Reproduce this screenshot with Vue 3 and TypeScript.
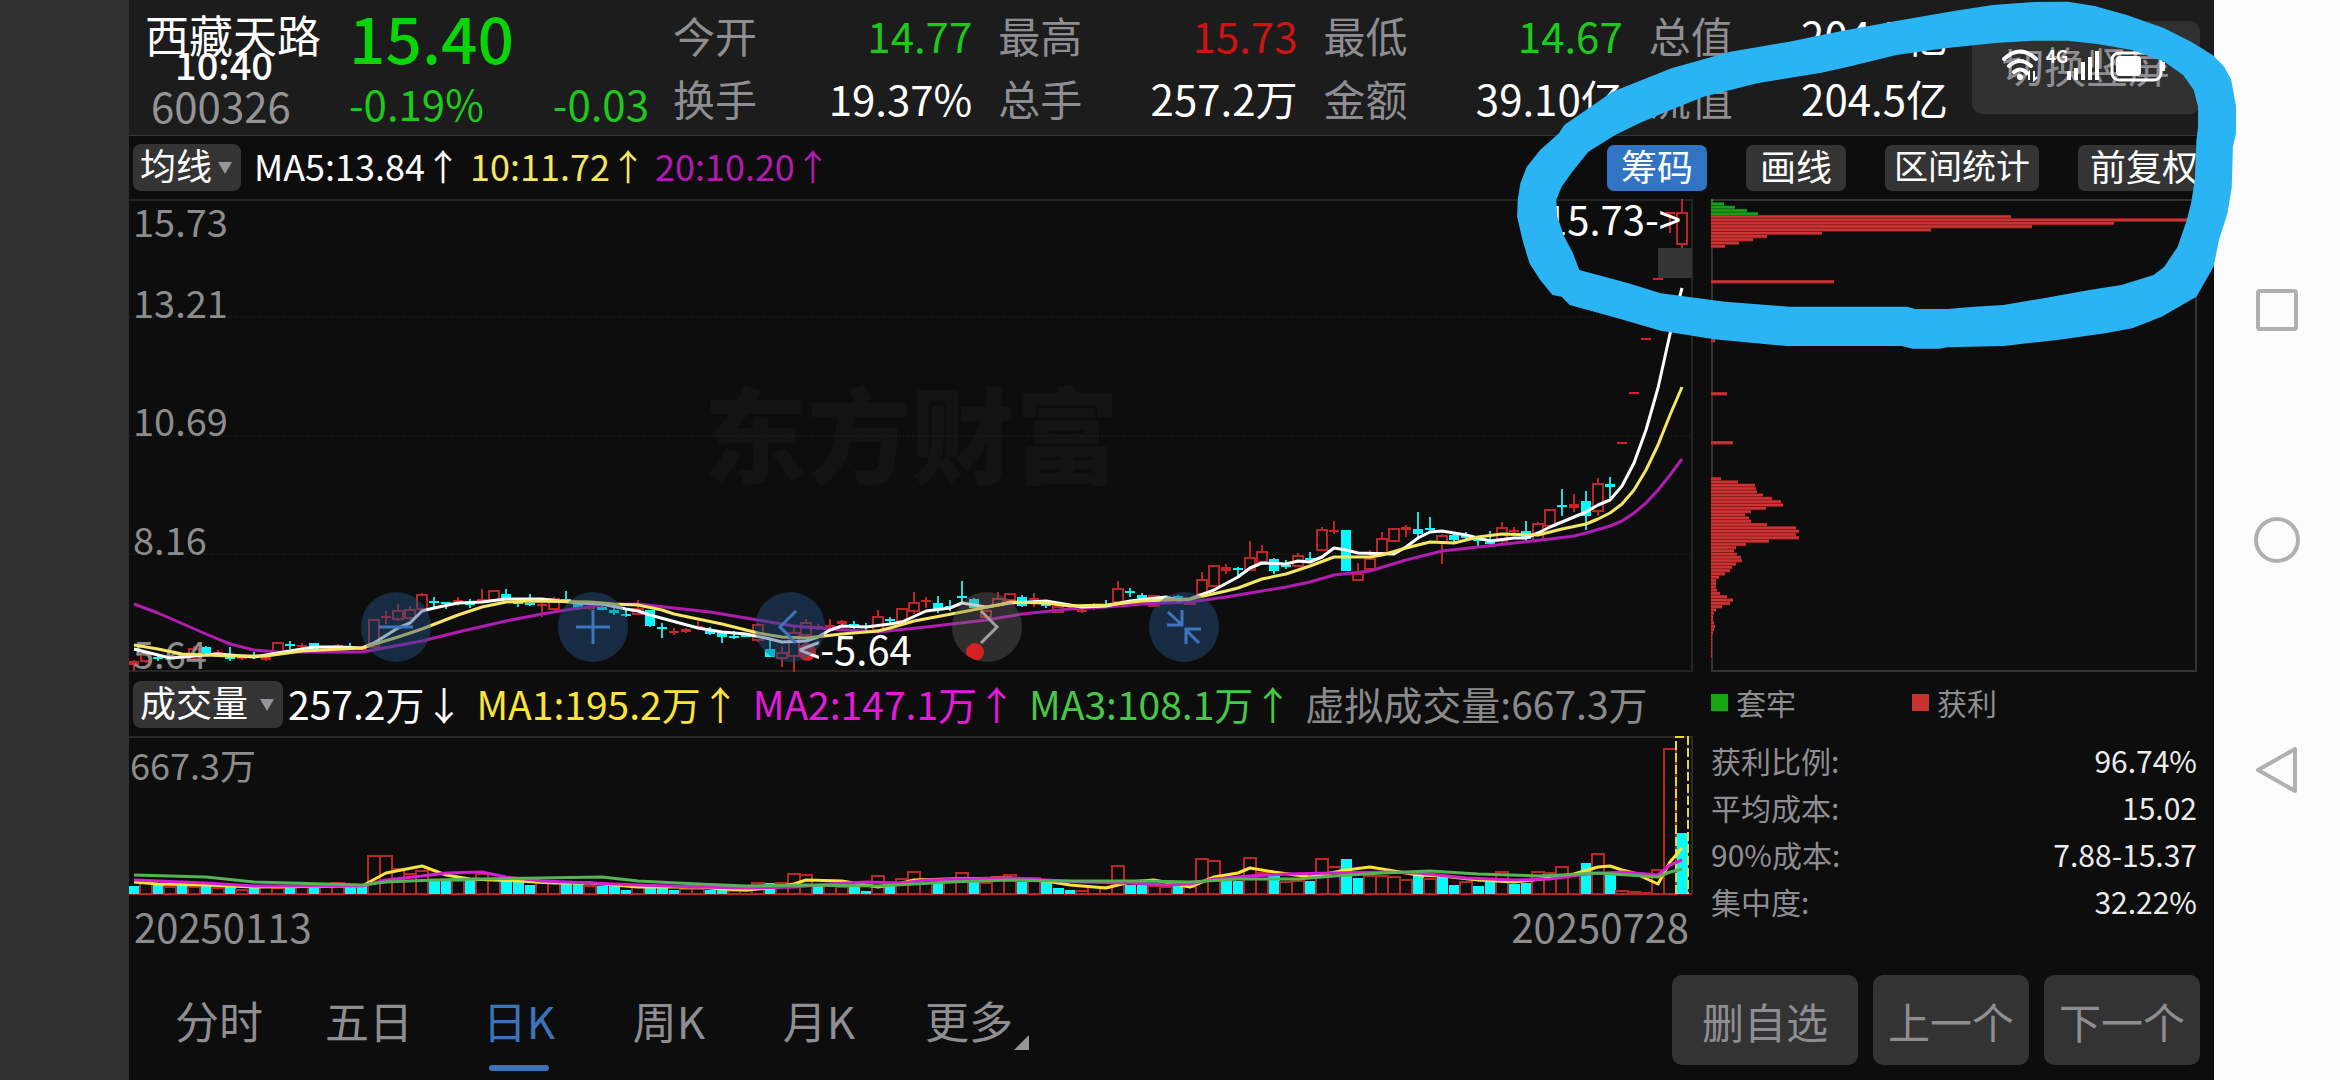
<script setup lang="ts">
import { computed, ref } from 'vue'

type Tone = 'up' | 'down' | 'flat' | 'plain'
interface Stat { label: string; value: string; tone: Tone }
interface Candle { x: number; rise: boolean; high: number; top: number; bottom: number; low: number }
interface Bar { x: number; rise: boolean; height: number }
interface Chip { y: number; width: number; trapped: boolean }

const stats: Stat[] = [
  { label: '今开', value: '14.77', tone: 'down' },
  { label: '最高', value: '15.73', tone: 'up' },
  { label: '最低', value: '14.67', tone: 'down' },
  { label: '总值', value: '204.5亿', tone: 'plain' },
  { label: '换手', value: '19.37%', tone: 'plain' },
  { label: '总手', value: '257.2万', tone: 'plain' },
  { label: '金额', value: '39.10亿', tone: 'plain' },
  { label: '流值', value: '204.5亿', tone: 'plain' },
]

const tools = ['筹码', '画线', '区间统计', '前复权']
const activeTool = ref('筹码')
const periods = ['分时', '五日', '日K', '周K', '月K', '更多']
const activePeriod = ref('日K')

const chipStats = [
  ['获利比例:', '96.74%'],
  ['平均成本:', '15.02'],
  ['90%成本:', '7.88-15.37'],
  ['集中度:', '32.22%'],
]

const FIRST_X = 134
const STEP = 12
const xAt = (index: number): number => FIRST_X + STEP * index

/* One day each: r rises, c falls; then high, body top, body bottom, low. */
const candleSource = `
r660,661,665,671 r653,655,661,663 c655,657,659,661 r657,658,659,660 r656,657,659,661
r646,649,659,661 c646,647,653,655 r650,652,653,656 c647,654,659,661 r656,657,659,660
c652,656,658,659 r656,657,660,661 r643,643,652,652 c641,644,646,649 r643,645,647,649
c643,643,649,649 r648,648,650,650 r644,645,647,648 c643,647,648,649 r648,648,650,650
r619,620,647,650 r611,616,618,624 r604,611,619,621 r606,610,618,620 r593,595,609,611
c597,601,603,608 c602,602,604,609 r597,600,602,606 c599,603,605,608 r589,599,601,603
r591,591,600,600 c589,594,599,600 c600,602,603,607 c594,603,605,606 r603,604,606,617
r597,599,609,611 c591,599,600,602 c604,604,608,608 r606,607,609,610 c606,607,610,610
c608,610,613,615 c610,614,615,617 r600,609,614,615 c610,610,626,627 c623,627,629,638
r628,631,632,635 r628,629,632,633 r621,626,627,628 c627,631,634,635 c632,633,637,643
c631,636,637,639 c633,635,637,637 r623,625,640,642 c640,649,657,657 r647,653,658,667
r627,633,656,672 r619,623,635,638 r624,626,628,630 r619,625,627,628 r620,621,624,625
c621,624,628,629 c623,626,628,630 r610,617,630,630 c617,619,621,624 r608,609,621,621
r592,603,611,614 r597,600,602,608 c596,603,610,613 c600,606,607,611 c581,596,598,602
c598,599,608,608 r610,611,617,618 r592,599,605,606 r593,594,600,601 c595,597,606,607
r593,598,600,607 c602,603,606,608 r607,607,612,612 r605,605,607,607 r609,610,612,613
r603,606,608,610 c600,604,605,606 r581,589,602,602 c588,591,593,597 c593,595,599,600
r595,596,606,607 r597,598,602,603 c595,596,599,600 r598,599,604,605 r572,580,594,595
r565,566,586,586 r564,567,571,574 c567,568,570,577 r541,558,570,571 r545,552,562,562
c558,559,571,574 c560,565,567,569 r553,556,566,567 c552,558,560,562 r527,530,550,551
r521,530,532,534 c530,530,571,571 r563,574,580,580 r550,559,569,570 r532,539,553,554
r528,529,541,542 r525,527,530,537 c512,529,534,537 c517,528,530,531 r534,536,542,564
c534,535,540,542 c532,536,538,539 c536,539,541,546 c531,542,544,545 r522,528,541,545
r527,530,532,534 c521,531,539,541 r522,524,540,541 r509,510,526,526 c489,505,506,516
r494,504,508,512 c491,501,516,530 r478,484,511,516 c477,484,487,498 r442,442,444,444
r392,392,394,394 r338,338,340,340 r278,278,280,280 r212,212,214,233 r199,213,244,248`

const candles = computed<Candle[]>(() =>
  candleSource.trim().split(/\s+/).map((item, index) => {
    const [high, top, bottom, low] = item.slice(1).split(',').map(Number)
    return { x: xAt(index), rise: item[0] === 'r', high, top, bottom, low }
  }),
)

const volumeSource = `
c8 r11 c9 r7 c8 r7 c8 r6 c8 r4 c7 r7 r6 c8 r7 c8 r7 r11 c9 c9
r38 r38 r25 r20 r23 c14 c14 r13 c14 r20 r15 c13 c12 c9 r11 r11 c11 c10 r8 c8
c8 c4 r8 c8 c8 c4 r5 r5 c4 c4 r3 r3 r11 c11 r11 r20 r19 c9 r8 r7
c8 c3 r18 c8 r15 r22 r15 c10 r14 r21 c12 r11 r17 r19 c12 r16 c13 c6 c4 r3
r7 r7 r28 c9 c9 r8 r7 c8 r7 r35 r33 c14 c13 r36 r21 c18 r12 r13 c13 r35
r27 c35 c16 r18 r18 r17 r14 c19 r15 c17 c9 r12 c8 c12 r22 c10 c11 r22 r21 r27
r19 c31 r40 c19 r3 r2 r1 r24 r145 c61`

const volumes = computed<Bar[]>(() =>
  volumeSource.trim().split(/\s+/).map((item, index) => ({
    x: xAt(index), rise: item[0] === 'r', height: Number(item.slice(1)),
  })),
)

/* Lines are kept as "day:height" pairs. */
const toPoints = (source: string): string =>
  source.split(' ').map((pair) => {
    const [day, y] = pair.split(':').map(Number)
    return `${xAt(day)},${y}`
  }).join(' ')

const priceLines = [
  { color: '#b01cb0', points: toPoints('0:604 2:613 6:634 8:644 10:650 12:652 19:652 24:641 27:632 31:621 34:614 36:610 39:605 42:604 45:608 48:612 52:620 55:626 58:629 62:632 66:627 71:620 74:614 78:609 81:607 84:604 88:602 91:597 94:591 96:587 98:582 100:575 103:571 106:560 109:551 112:547 115:543 118:539 120:536 121:533 123:526 124:521 125:513 126:503 127:490 128:475 129:459') },
  { color: '#ffffff', points: toPoints('0:649 2:655 3:658 4:657 7:654 10:657 13:651 15:647 17:647 19:648 20:643 22:628 23:623 24:611 25:608 27:603 29:602 31:599 34:599 37:603 39:604 41:609 42:611 43:615 47:628 49:632 51:634 53:639 54:642 56:641 57:637 58:630 59:626 61:627 63:624 64:622 66:611 68:608 69:603 71:607 73:603 76:601 78:605 79:607 81:606 83:601 86:597 87:600 88:599 90:590 92:577 93:568 94:563 96:564 97:561 98:562 99:557 100:548 101:550 102:553 105:554 106:547 107:538 108:532 109:531 111:535 113:541 115:538 116:538 117:533 118:527 120:517 121:512 122:505 123:500 124:486 125:463 126:430 127:388 128:334 129:288') },
  { color: '#f5e663', points: toPoints('0:645 2:649 4:654 8:656 11:656 14:651 19:648 22:637 24:629 27:615 29:607 31:602 33:601 38:602 40:604 42:605 44:610 45:614 49:624 52:633 54:637 56:638 59:634 62:631 63:628 65:621 69:612 72:605 73:602 76:603 78:606 81:605 84:601 88:599 91:591 92:588 94:579 96:574 98:566 100:557 103:557 104:555 106:548 108:542 110:543 112:537 114:534 117:535 119:529 121:524 122:519 123:513 124:504 125:490 126:470 127:445 128:415 129:387') },
]

const volumeLines = [
  { color: '#fbe437', points: toPoints('0:882 2:884 6:885 10:887 19:886 21:873 24:866 26:875 28:879 32:881 35:883 38:883 42:887 47:887 49:889 51:890 53:888 55:884 56:880 59:881 62:887 64:883 65:880 68:879 73:878 76:881 78:885 81:888 83:882 85:880 88:887 90:877 92:873 93:868 95:872 98:877 101:870 103:867 105:871 107:875 109:876 112:880 115:882 118:878 120:874 122:867 123:866 124:870 125:873 127:884 128:862 129:848') },
  { color: '#d61fd0', points: toPoints('0:880 6:883 10:886 19:886 21:880 24:876 26:873 29:872 31:877 34:881 38:883 42:885 47:887 51:888 55:887 58:884 61:882 64:883 66:880 73:878 76:880 79:882 83:883 86:885 88:884 90:879 93:876 96:874 100:873 104:872 107:873 111:878 115:880 118:879 121:874 124:872 127:875 128:865 129:860') },
  { color: '#55b555', points: toPoints('0:875 6:877 10:882 16:884 19:885 21:882 25:880 29:879 39:877 42:881 47:884 51:886 56:885 62:886 68:882 73:880 77:881 84:881 88:882 92:879 97:879 100:876 104:873 108:871 112:874 117:876 119:875 122:873 127:877 128:872 129:869') },
]

const gridRows = [317, 436, 554]
const priceLabels = [
  { y: 237, text: '15.73' },
  { y: 318, text: '13.21' },
  { y: 436, text: '10.69' },
  { y: 555, text: '8.16' },
  { y: 669, text: '5.64' },
]

const CHIP_STEP = 3.28
const run = (start: number, widths: number[], trapped = false): Chip[] =>
  widths.map((width, index) => ({ y: start + index * CHIP_STEP, width, trapped }))

const chips: Chip[] = [
  ...run(199, [2, 13, 24, 36, 47], true),
  ...run(215, [300, 484, 403, 321, 220, 111, 56, 42, 28, 14]),
  ...run(280, [123]),
  ...run(339, [4]),
  ...run(392, [16]),
  ...run(441, [22]),
  ...run(477, [10, 27, 44, 45, 46, 52, 61, 70, 72, 55, 40, 34, 38, 40, 56, 85, 88, 85, 88, 58, 35, 25, 23, 26, 30, 31, 25, 21, 19, 14, 8, 5, 5, 5, 6, 9, 16, 22, 19, 11, 5, 3, 2, 2, 3, 4, 3, 2, 1, 1, 1, 1, 1, 1, 1]),
]
</script>

<template>
  <div class="screen">
    <div class="gutter"></div>

    <main class="app">
      <header class="quote">
        <div class="identity">
          <h1>西藏天路</h1>
          <p>600326</p>
        </div>
        <div class="price">
          <strong>15.40</strong>
          <p><span>-0.19%</span><span>-0.03</span></p>
        </div>
        <dl class="stats">
          <div v-for="stat in stats" :key="stat.label">
            <dt>{{ stat.label }}</dt>
            <dd :class="stat.tone">{{ stat.value }}</dd>
          </div>
        </dl>
        <button class="rotate" type="button">切换竖屏</button>
      </header>

      <div class="toolbar">
        <label class="picker">
          <select aria-label="均线"><option>均线</option></select>
          <i class="caret"></i>
        </label>
        <p class="averages">
          <span>MA5:13.84↑</span><span class="yellow">10:11.72↑</span><span class="purple">20:10.20↑</span>
        </p>
        <div class="tools">
          <button
            v-for="tool in tools"
            :key="tool"
            type="button"
            :class="{ active: tool === activeTool, long: tool.length > 3, medium: tool.length === 3 }"
            @click="activeTool = tool"
          >{{ tool }}</button>
        </div>
      </div>

      <section class="board">
        <div class="left">
          <div class="kline">
            <svg viewBox="129 199 1564 473">
              <text class="watermark" x="911" y="476" text-anchor="middle">东方财富</text>
              <g stroke="#2c2c2c" fill="none">
                <line v-for="y in gridRows" :key="y" x1="129" :y1="y" x2="1692" :y2="y" stroke-dasharray="1 2" />
              </g>
              <path d="M129 200H1692V671H129" fill="none" stroke="#242424" stroke-width="2" />
              <rect x="1658" y="248" width="34" height="30" fill="#343434" />
              <g v-for="c in candles" :key="c.x" :class="c.rise ? 'rise' : 'fall'">
                <path :d="`M${c.x} ${c.high}V${c.top}M${c.x} ${c.bottom}V${c.low}`" stroke-width="2" />
                <rect
                  v-if="c.rise && c.bottom - c.top > 4"
                  class="hollow" :x="c.x - 5" :y="c.top" width="10" :height="c.bottom - c.top" stroke-width="2"
                />
                <rect v-else class="solid" :x="c.x - 5" :y="c.top" width="10" :height="Math.max(2, c.bottom - c.top)" />
              </g>
              <g class="scale">
                <text v-for="label in priceLabels" :key="label.text" x="133" :y="label.y">{{ label.text }}</text>
              </g>
              <polyline
                v-for="line in priceLines" :key="line.color" :points="line.points"
                fill="none" :stroke="line.color" stroke-width="3" stroke-linejoin="round"
              />
              <circle cx="807" cy="652" r="9" fill="#d42222" />
              <text class="mark" x="798" y="665">&lt;-5.64</text>
              <text class="mark" x="1681" y="235" text-anchor="end">15.73-&gt;</text>
            </svg>
            <div class="controls">
              <button type="button" aria-label="-"><svg viewBox="0 0 70 70"><path d="M18 35H52" /></svg></button>
              <button type="button" aria-label="+"><svg viewBox="0 0 70 70"><path d="M18 35H52M35 18V52" /></svg></button>
              <button type="button" aria-label="&lt;"><svg viewBox="0 0 70 70"><path d="M41 19L25 35L41 51" /></svg></button>
              <button type="button" aria-label="&gt;" class="muted">
                <svg viewBox="0 0 70 70"><circle cx="23" cy="60" r="9" /><path d="M29 19L45 35L29 51" /></svg>
              </button>
              <button type="button" aria-label="><"><svg viewBox="0 0 70 70"><path d="M19 20L32 32M33 18V33H18M50 51L38 39M37 52V37H52" /></svg></button>
            </div>
          </div>

          <div class="volume-bar">
            <label class="picker wide">
              <select aria-label="成交量"><option>成交量</option></select>
              <i class="caret"></i>
            </label>
            <p>
              <span>257.2万↓</span><span class="bright">MA1:195.2万↑</span><span class="pink">MA2:147.1万↑</span><span class="green">MA3:108.1万↑</span><span class="dim">虚拟成交量:667.3万</span>
            </p>
          </div>

          <svg viewBox="129 736 1564 159">
            <path d="M129 737H1692V894" fill="none" stroke="#2a2a2a" stroke-width="2" />
            <text class="amount" x="130" y="780">667.3万</text>
            <path d="M129 894H1692" stroke="#8c2020" stroke-width="2" />
            <g v-for="b in volumes" :key="b.x">
              <rect v-if="b.rise" class="rise hollow" :x="b.x - 6" :y="894 - b.height" width="12" :height="b.height" stroke-width="2" />
              <rect v-else class="fall solid" :x="b.x - 5" :y="894 - b.height" width="11" :height="b.height" />
            </g>
            <path d="M1676 894V737H1688V894" fill="none" stroke="#e8d531" stroke-width="2" stroke-dasharray="9 3" />
            <polyline
              v-for="line in volumeLines" :key="line.color" :points="line.points"
              fill="none" :stroke="line.color" stroke-width="3" stroke-linejoin="round"
            />
          </svg>

          <div class="dates"><time>20250113</time><time>20250728</time></div>
        </div>

        <aside class="right">
          <svg viewBox="1711 199 486 473">
            <path d="M1712 200H2196V671H1712Z" fill="none" stroke="#333" stroke-width="2" />
            <g v-for="chip in chips" :key="chip.y">
              <rect x="1711" :y="chip.y" :width="chip.width" height="3.600" :fill="chip.trapped ? '#0c6e0c' : '#8f1c1c'" />
              <rect x="1711" :y="chip.y + 0.500" :width="chip.width" height="2.300" :fill="chip.trapped ? '#18a018' : '#cc3535'" />
            </g>
          </svg>
          <ul>
            <li><i class="box trapped"></i>套牢</li>
            <li><i class="box gained"></i>获利</li>
          </ul>
          <dl>
            <div v-for="[label, value] in chipStats" :key="label">
              <dt>{{ label }}</dt>
              <dd>{{ value }}</dd>
            </div>
          </dl>
        </aside>
      </section>

      <footer>
        <nav>
          <button
            v-for="period in periods"
            :key="period"
            type="button"
            :class="{ active: period === activePeriod }"
            @click="activePeriod = period"
          >{{ period }}<i v-if="period === '更多'" class="corner"></i></button>
        </nav>
        <div class="actions">
          <button type="button" class="remove">删自选</button>
          <button type="button">上一个</button>
          <button type="button">下一个</button>
        </div>
      </footer>

      <time class="clock">10:40</time>
      <svg class="status" viewBox="0 0 164 34">
        <g fill="none" stroke="#fff" stroke-width="4" stroke-linecap="round">
          <path d="M3 10Q19 -5 35 10M8 17Q19 7 30 17M13 23Q19 18 25 23" />
        </g>
        <circle cx="19" cy="28" r="3" fill="#fff" />
        <path d="M28 31V23L25 26M33 22V31L36 28" fill="none" stroke="#fff" stroke-width="2" />
        <text x="45" y="14">4G</text>
        <path d="M66 22h4v9h-4zM73 19h4v12h-4zM80 13h4v18h-4zM87 8h4v23h-4zM94 2h4v29h-4z" fill="#fff" />
        <rect x="111" y="4" width="49" height="27" rx="7" fill="none" stroke="#fff" stroke-width="3" />
        <rect x="115" y="7" width="25" height="20" rx="4" fill="#fff" />
        <path d="M162 13v9" stroke="#fff" stroke-width="4" />
      </svg>
    </main>

    <nav class="system">
      <button type="button" aria-label="□"><svg viewBox="0 0 46 46"><rect x="4" y="4" width="38" height="38" rx="2" /></svg></button>
      <button type="button" aria-label="○"><svg viewBox="0 0 46 46"><circle cx="23" cy="23" r="21" /></svg></button>
      <button type="button" aria-label="◁"><svg viewBox="0 0 46 46"><path d="M4 23L41 2V44Z" /></svg></button>
    </nav>

    <svg class="loop" viewBox="0 0 1568 1080" preserveAspectRatio="none">
      <path
        fill="#2bb4f4"
        fill-rule="evenodd"
        d="M1060 5L1110 18L1170 45L1240 85L1290 125L1330 165L1352 200L1365 240L1374 320L1374 400L1368 440L1366 560L1358 640L1342 720L1332 800L1300 890L1235 950L1180 985L1130 1000L1040 1020L940 1038L835 1042L820 1046L770 1046L750 1038L535 1038L400 1018L300 992L210 950L130 915L115 890L98 885L75 840L55 790L42 720L32 650L33 600L38 550L50 500L75 450L110 400L120 375L210 275L320 205L430 155L540 125L640 92L750 60L850 32L920 15L1000 6Z
           M1060 122L1115 132L1180 150L1240 185L1275 225L1295 270L1303 320L1303 380L1300 420L1297 540L1290 610L1282 660L1265 740L1240 800L1220 825L1160 855L1100 870L1020 893L940 915L885 920L835 927L775 927L760 920L540 920L420 905L300 880L240 850L148 810L135 755L120 710L107 650L105 600L115 560L135 515L165 455L215 405L260 370L310 335L380 290L480 250L600 218L650 200L740 165L830 145L930 128L1000 122Z"
      />
    </svg>
  </div>
</template>

<style>
body {
  margin: 0;
  background: #0d0d0d;
}
</style>

<style scoped>
.screen {
  position: relative;
  display: grid;
  grid-template-columns: 129px minmax(0, 1fr) 126px;
  min-height: 100vh;
  overflow: hidden;
  font-family: "Noto Sans CJK SC", "Noto Sans", sans-serif;
  color: #fff;
}

h1, p, dl, dd, ul {
  margin: 0;
  padding: 0;
  font-weight: 400;
}

button, select {
  border: 0;
  padding: 0;
  font: inherit;
  color: inherit;
  background: none;
  cursor: pointer;
}

svg {
  display: block;
  width: 100%;
}

.gutter {
  background: #303030;
}

.app {
  position: relative;
  display: flex;
  flex-direction: column;
  background: #0d0d0d;
}

/* Quote header */
.quote {
  display: flex;
  align-items: flex-start;
  box-sizing: border-box;
  height: 136px;
  padding: 3px 14px 0 16px;
  border-bottom: 1px solid #363636;
  background: #1c1c1c;
  font-size: 42px;
  white-space: nowrap;
}

.identity {
  width: 204px;
}

.identity h1 {
  font-size: 44px;
  line-height: 63px;
}

.identity p {
  padding-left: 6px;
  line-height: 78px;
  color: #949494;
}

.price {
  width: 300px;
  color: #1ec81e;
}

.price strong {
  display: block;
  font-size: 64px;
  font-weight: 500;
  line-height: 66px;
  color: #08d408;
}

.price p {
  display: flex;
  justify-content: space-between;
  line-height: 68px;
}

.stats {
  flex: 1;
  display: grid;
  grid-template-columns: repeat(4, 1fr);
  column-gap: 26px;
  margin: 0 24px;
  line-height: 63px;
}

.stats div {
  display: flex;
  justify-content: space-between;
}

.stats dt {
  color: #8e8e92;
}

.up { color: #cc1414; }
.down { color: #1ec81e; }

.rotate {
  width: 228px;
  height: 93px;
  margin-top: 18px;
  border-radius: 10px;
  padding-bottom: 6px;
  background: #303030;
  color: #8e8e92;
}

/* Indicator toolbar */
.toolbar {
  display: flex;
  align-items: center;
  height: 63px;
  padding-left: 4px;
  font-size: 36px;
  white-space: nowrap;
}

.picker {
  position: relative;
  flex: none;
  width: 108px;
  height: 47px;
  border-radius: 8px;
  background: #343434;
  font-size: 36px;
}

.picker.wide {
  width: 150px;
}

.picker select {
  appearance: none;
  display: block;
  box-sizing: border-box;
  width: 100%;
  height: 47px;
  padding: 0 0 6px 7px;
  line-height: 41px;
  outline: 0;
}

.caret {
  position: absolute;
  right: 9px;
  top: 18px;
  border: 7px solid transparent;
  border-top: 12px solid #96969a;
  border-bottom: 0;
  pointer-events: none;
}

.averages {
  display: flex;
  gap: 9px;
  margin-left: 13px;
  padding-bottom: 6px;
  line-height: 48px;
}

.yellow { color: #f5e663; }
.purple { color: #b01cb0; }
.bright { color: #fbe437; }
.pink { color: #e619dc; }
.green { color: #46c846; }
.dim { color: #8a8a8a; }

.tools {
  display: flex;
  gap: 39px;
  margin-left: auto;
  margin-right: 4px;
}

.tools button {
  width: 100px;
  height: 46px;
  padding-bottom: 6px;
  border-radius: 7px;
  background: #343434;
  line-height: 40px;
}

.tools .medium {
  width: 132px;
}

.tools .long {
  width: 154px;
  font-size: 34px;
}

.tools .active {
  background: #3274c4;
}

/* Charts */
.board {
  display: grid;
  grid-template-columns: minmax(0, 1fr) 486px;
  column-gap: 18px;
  padding-right: 17px;
}

.kline {
  position: relative;
}

.rise { stroke: #b82626; fill: #d02222; }
.fall { stroke: #26d8d8; fill: #00fcfc; }
.hollow { fill: #0d0d0d; }
.solid { stroke: none; }

.watermark {
  font-size: 104px;
  font-weight: 900;
  fill: #131313;
}

.scale {
  font-size: 38px;
  fill: #8c8c8c;
}

.mark {
  font-size: 40px;
  fill: #fff;
}

.amount {
  font-size: 36px;
  fill: #8c8c8c;
}

.controls {
  position: absolute;
  left: 232px;
  bottom: 10px;
  display: flex;
  gap: 127px;
}

.controls button {
  width: 70px;
  height: 70px;
  border-radius: 50%;
  background: rgba(36, 80, 134, 0.45);
  overflow: hidden;
}

.controls path {
  fill: none;
  stroke: #3d76bd;
  stroke-width: 3;
}

.controls circle {
  fill: #d42222;
}

.controls .muted {
  background: rgba(110, 110, 110, 0.35);
}

.controls .muted path {
  stroke: #a0a0a0;
}

.volume-bar {
  display: flex;
  align-items: center;
  height: 64px;
  padding-left: 4px;
  font-size: 39px;
  white-space: nowrap;
}

.volume-bar p {
  display: flex;
  gap: 13px;
  margin-left: 5px;
  padding-bottom: 3px;
  line-height: 56px;
}

.dates {
  display: flex;
  justify-content: space-between;
  padding: 0 4px 0 5px;
  font-size: 40px;
  line-height: 62px;
  color: #8c8c8c;
}

/* Chip distribution */
.right ul {
  display: flex;
  list-style: none;
  height: 60px;
  margin-bottom: 5px;
  color: #8e8e92;
  font-size: 30px;
  line-height: 56px;
}

.right li {
  display: flex;
  align-items: center;
  width: 201px;
}

.box {
  width: 17px;
  height: 17px;
  margin-right: 8px;
}

.trapped { background: #16a616; }
.gained { background: #c93232; }

.right dl {
  font-size: 30px;
  line-height: 47px;
}

.right dl div {
  display: flex;
  justify-content: space-between;
}

.right dt {
  color: #8e8e92;
}

.right dd {
  color: #ececec;
}

/* Bottom bar */
footer {
  display: flex;
  align-items: center;
  justify-content: space-between;
  margin-top: auto;
  padding: 0 14px 9px 15px;
  height: 102px;
}

footer nav, .actions {
  display: flex;
}

footer nav button {
  position: relative;
  width: 150px;
  height: 102px;
  line-height: 88px;
  font-size: 44px;
  color: #8e8e92;
}

footer nav .active {
  color: #3b74b9;
}

footer nav .active::after {
  content: "";
  position: absolute;
  left: 45px;
  bottom: 0;
  width: 60px;
  height: 6px;
  border-radius: 3px;
  background: #3b74b9;
}

.corner {
  position: absolute;
  right: 15px;
  bottom: 21px;
  border-left: 15px solid transparent;
  border-bottom: 15px solid #96969a;
}

.actions {
  gap: 15px;
}

.actions button {
  width: 156px;
  height: 90px;
  border-radius: 10px;
  background: #333;
  color: #8e8e92;
  font-size: 42px;
}

.actions .remove {
  width: 186px;
}

/* Phone status and navigation */
.clock {
  position: absolute;
  left: 46px;
  top: 39px;
  font-size: 38px;
  font-weight: 500;
  line-height: 50px;
}

.status {
  position: absolute;
  right: 49px;
  top: 49px;
  width: 164px;
  height: 34px;
}

.status text {
  font-size: 17px;
  font-weight: 700;
  fill: #fff;
}

.system {
  display: flex;
  flex-direction: column;
  align-items: center;
  justify-content: center;
  gap: 184px;
  background: #fcfcfc;
}

.system button {
  width: 46px;
  height: 46px;
}

.system svg {
  fill: none;
  stroke: #b0b0b0;
  stroke-width: 4;
  stroke-linejoin: round;
}

.loop {
  position: absolute;
  top: 0;
  right: 0;
  width: 840px;
  height: 360px;
  pointer-events: none;
}
</style>
